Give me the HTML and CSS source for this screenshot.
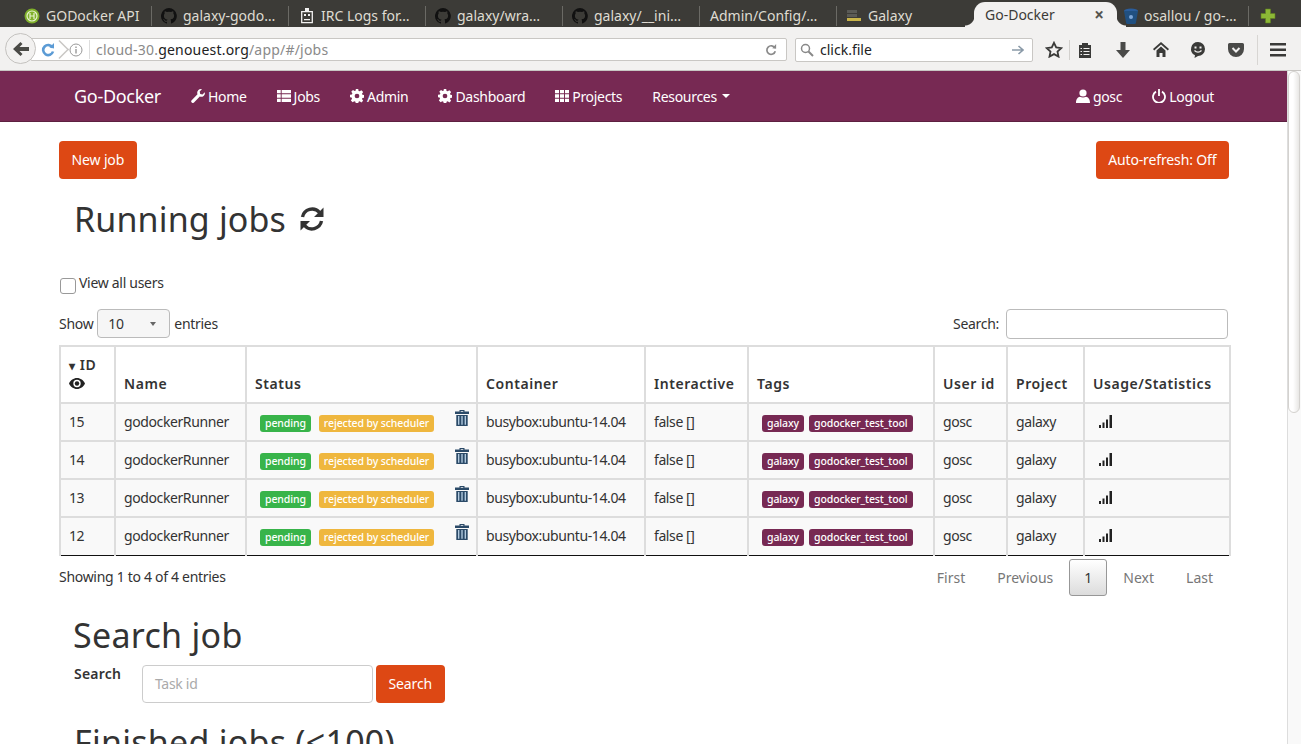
FILE: index.html
```html
<!DOCTYPE html>
<html>

<head>
    <title>Go-Docker</title>
    <link rel="stylesheet" href="styles.css">
</head>

<body>
    <svg class="defs" width="0" height="0">
        <symbol id="i-github" viewBox="0 0 16 16">
            <path fill="#111" d="M8 0a8 8 0 0 0-2.5 15.6c.4.1.5-.2.5-.4v-1.4c-2.2.5-2.7-1-2.7-1-.4-.9-.9-1.200-.9-1.200-.7-.5.100-.5.100-.5.800.1 1.200.8 1.200.8.700 1.200 1.900.9 2.300.7.100-.5.300-.9.500-1.100-1.800-.2-3.600-.9-3.600-4 0-.9.300-1.600.8-2.100-.1-.2-.4-1 .1-2.100 0 0 .7-.2 2.200.8a7.600 7.600 0 0 1 4 0c1.500-1 2.200-.8 2.200-.8.400 1.100.2 1.900.1 2.100.5.600.8 1.300.8 2.100 0 3.100-1.900 3.700-3.700 3.900.3.300.6.700.6 1.500v2.200c0 .2.100.5.600.4A8 8 0 0 0 8 0z"/>
        </symbol>
        <symbol id="i-trash" viewBox="0 0 14 16">
            <path fill="#2b4a68" d="M4.500 0h5v1.500H14V4H0V1.500h4.500zM5.700 1v.7h2.600V1zM1.300 5h11.400v11H1.300z"/>
            <path stroke="#b9d2e6" stroke-width="1.300" d="M3.700 6v8.800M7 6v8.800M10.300 6v8.800"/>
        </symbol>
        <symbol id="i-signal" viewBox="0 0 14 14">
            <path fill="#222" d="M0 11h2v3H0zM3.500 8.500h2V14h-2zM7 5.500h2V14H7zM10.500 1h2.500v13h-2.500z"/>
        </symbol>
        <symbol id="i-cog" viewBox="0 0 16 16">
            <path fill="#fff" fill-rule="evenodd" d="M6.600 0h2.800l.4 2.200 1.300.5L13 1.400l2 2-1.300 1.900.5 1.300 2.200.4v2.800l-2.200.4-.5 1.300 1.300 1.900-2 2-1.900-1.300-1.300.5-.4 2.200H6.600l-.4-2.200-1.300-.5L3 15l-2-2 1.300-1.900-.5-1.300L0 9.400V6.600l2.200-.4.500-1.300L1.400 3l2-2 1.900 1.300 1.300-.5zM8 5.300a2.700 2.700 0 1 0 0 5.400 2.700 2.700 0 0 0 0-5.400z"/>
        </symbol>
        <symbol id="i-list" viewBox="0 0 15 13">
            <path fill="#fff" d="M0 0h4v3.500H0zM5 0h10v3.500H5zM0 4.750h4v3.500H0zM5 4.750h10v3.500H5zM0 9.500h4V13H0zM5 9.500h10V13H5z"/>
        </symbol>
        <symbol id="i-th" viewBox="0 0 15 13">
            <path fill="#fff" d="M0 0h4.300v3.500H0zM5.350 0h4.300v3.500h-4.300zM10.700 0H15v3.500h-4.300zM0 4.750h4.300v3.500H0zM5.350 4.750h4.300v3.500h-4.300zM10.700 4.750H15v3.500h-4.300zM0 9.500h4.300V13H0zM5.350 9.500h4.300V13h-4.300zM10.700 9.500H15V13h-4.300z"/>
        </symbol>
    </svg>

    <div class="tabbar">
        <div class="tab tab-first">
            <svg class="tab-icon" viewBox="0 0 16 16"><circle cx="8" cy="8" r="7.500" fill="#7fb02a"/><circle cx="8" cy="8" r="5" fill="none" stroke="#e8f2d0" stroke-width="1.200"/><path stroke="#e8f2d0" stroke-width="1.200" d="M6 5v6M10 5v6M6 8h4"/></svg>
            <span>GODocker API</span>
        </div>
        <div class="tab"><svg class="tab-icon"><use href="#i-github"/></svg><span>galaxy-godo…</span></div>
        <div class="tab tab-irc">
            <svg class="tab-icon" viewBox="0 0 16 16"><path fill="none" stroke="#f2f1f0" stroke-width="1.300" d="M2.700 3.700h10.600v11H2.700z"/><path fill="#f2f1f0" d="M6 0h4v3H6zM5 6h2v2H5zM9 6h2v2H9zM5 11h6v1.200H5z"/></svg>
            <span>IRC Logs for…</span>
        </div>
        <div class="tab"><svg class="tab-icon"><use href="#i-github"/></svg><span>galaxy/wra…</span></div>
        <div class="tab"><svg class="tab-icon"><use href="#i-github"/></svg><span>galaxy/__ini…</span></div>
        <div class="tab tab-noicon"><span>Admin/Config/…</span></div>
        <div class="tab tab-plain">
            <svg class="tab-icon" viewBox="0 0 16 16"><path fill="#5a5a56" d="M1 2h10v3H1zM1 6h10v3H1z"/><path fill="#c9b44a" d="M1 10h14v3H1z"/></svg>
            <span>Galaxy</span>
        </div>
        <div class="tab tab-active"><span>Go-Docker</span><b class="tab-close">×</b></div>
        <div class="tab tab-after">
            <svg class="tab-icon" viewBox="0 0 16 16"><ellipse cx="8" cy="3" rx="7" ry="2.500" fill="#2a5d9c"/><path fill="#205081" d="M1 3h14l-2 11.500a5 2 0 0 1-10 0z"/><circle cx="8" cy="9" r="2" fill="#7da7d8"/></svg>
            <span>osallou / go-…</span>
        </div>
        <svg class="tab-plus" viewBox="0 0 16 16"><path fill="#8cb836" stroke="#5f7f20" stroke-width=".6" d="M5.500 1h5v4.500H15v5h-4.500V15h-5v-4.500H1v-5h4.500z"/></svg>
    </div>

    <div class="toolbar">
        <div class="back-btn"><svg width="16" height="14" viewBox="0 0 16 14"><path fill="#4a4a46" d="M7.500 0l2 2-3 3H16v4H6.500l3 3-2 2L0 7z"/></svg></div>
        <div class="urlbar">
            <svg class="reload-blue" width="14" height="14" viewBox="0 0 14 14"><path fill="none" stroke="#5b9bd5" stroke-width="2.600" d="M11.500 4.500A5 5 0 1 0 12 8.500"/><path fill="#5b9bd5" d="M8.500 4.500L13 0v5.500z"/></svg>
            <span class="url-chevron"></span>
            <svg class="info-icon" width="14" height="14" viewBox="0 0 14 14"><circle cx="7" cy="7" r="6" fill="none" stroke="#999"/><path stroke="#999" stroke-width="1.400" d="M7 6v4.500M7 3.500v1.400"/></svg>
            <span class="url-text">cloud-30.<b>genouest.org</b>/app/#/jobs</span>
            <svg class="reload-gray" width="12" height="12" viewBox="0 0 14 14"><path fill="none" stroke="#8a8a8a" stroke-width="2" d="M11.500 4.500A5 5 0 1 0 12 8.500"/><path fill="#8a8a8a" d="M8.500 5L13 0v5.500z"/></svg>
        </div>
        <div class="searchbar">
            <svg width="14" height="14" viewBox="0 0 14 14"><circle cx="5.500" cy="5.500" r="4" fill="none" stroke="#888" stroke-width="1.500"/><path stroke="#888" stroke-width="2" d="M8.500 8.500L13 13"/></svg>
            <span class="search-text">click.file</span>
            <svg width="12" height="10" viewBox="0 0 12 10"><path fill="none" stroke="#8a9aa8" stroke-width="1.600" d="M0 5h10M6.500 1L11 5 6.500 9"/></svg>
        </div>
        <div class="tool-icons">
            <svg width="18" height="17" viewBox="0 0 18 17"><path fill="none" stroke="#3a3a38" stroke-width="1.800" d="M9 1.800l2.200 4.700 5 .6-3.700 3.500 1 5L9 13.100l-4.500 2.500 1-5L1.800 7.100l5-.6z"/></svg>
            <span class="tool-sep-short"></span>
            <svg class="tool-clip" width="14" height="16" viewBox="0 0 14 16"><path fill="#3a3a38" d="M1 3h3V1h6v2h3v13H1z"/><path stroke="#f2f1f0" d="M5.500 6.500h6M5.500 9.500h6M5.500 12.500h6M2.500 6.500h1.500M2.500 9.500h1.500M2.500 12.500h1.500"/></svg>
            <svg class="tool-down" width="14" height="16" viewBox="0 0 14 16"><path fill="#4a4a48" d="M4.500 0h5v8H14l-7 8-7-8h4.500z"/></svg>
            <svg class="tool-home" width="16" height="15" viewBox="0 0 16 15"><path fill="#3a3a38" d="M8 0l8 7-1.200 1.400L8 2.500 1.200 8.400 0 7zM3.500 8.500L8 4.600l4.500 3.900V15h-3v-4h-3v4h-3z"/></svg>
            <svg class="tool-smile" width="16" height="16" viewBox="0 0 16 16"><path fill="#3a3a38" d="M8 0a7 7 0 0 1 0 14l-3.500 2 .5-2.700A7 7 0 0 1 8 0z"/><path fill="#f2f1f0" d="M4.500 4.500h2v2h-2zM9.500 4.500h2v2h-2z"/><path fill="none" stroke="#f2f1f0" stroke-width="1.300" d="M4.500 8.500c2 2 5 2 7 0"/></svg>
            <svg class="tool-pocket" width="16" height="14" viewBox="0 0 16 14"><path fill="#4a4a48" d="M1.500 0h13A1.500 1.500 0 0 1 16 1.500V6a8 8 0 0 1-16 0V1.500A1.500 1.500 0 0 1 1.500 0z"/><path fill="none" stroke="#f2f1f0" stroke-width="2" d="M4.500 5L8 8.500 11.500 5"/></svg>
            <span class="tool-sep"></span>
            <svg class="tool-menu" width="16" height="14" viewBox="0 0 16 14"><path fill="#3a3a38" d="M0 0h16v2.500H0zM0 5.500h16V8H0zM0 11h16v2.500H0z"/></svg>
        </div>
    </div>

    <div class="viewport">
        <div class="content">
            <nav class="navbar">
                <a class="brand">Go-Docker</a>
                <a class="nav-link"><svg class="nav-icon" viewBox="0 0 14 14"><path fill="#fff" d="M13.800 3.200a3.800 3.800 0 0 1-5 4.400L3 13.500a1.500 1.500 0 0 1-2.300-2.300L6.500 5.300A3.800 3.800 0 0 1 11 .2L8.700 2.500l.5 2.400 2.300.5z"/></svg>Home</a>
                <a class="nav-link"><svg class="nav-icon"><use href="#i-list"/></svg>Jobs</a>
                <a class="nav-link"><svg class="nav-icon"><use href="#i-cog"/></svg>Admin</a>
                <a class="nav-link"><svg class="nav-icon"><use href="#i-cog"/></svg>Dashboard</a>
                <a class="nav-link"><svg class="nav-icon"><use href="#i-th"/></svg>Projects</a>
                <a class="nav-link">Resources <span class="caret"></span></a>
                <a class="nav-link nav-right"><svg class="nav-icon" viewBox="0 0 14 14"><circle cx="7" cy="4" r="3.600" fill="#fff"/><path fill="#fff" d="M0 14c0-4 2-6 4-6.200 1.800 1 4.200 1 6 0 2 .2 4 2.200 4 6.200z"/></svg>gosc</a>
                <a class="nav-link"><svg class="nav-icon" viewBox="0 0 14 14"><path fill="none" stroke="#fff" stroke-width="1.800" d="M4 2.600a6 6 0 1 0 6 0M7 0v7"/></svg>Logout</a>
            </nav>

            <div class="page">
                <div class="btn-row">
                    <a class="btn">New job</a>
                    <a class="btn">Auto-refresh: Off</a>
                </div>

                <h2 class="running-title">Running jobs
                    <svg class="refresh-icon" width="26" height="26" viewBox="0 0 26 26"><path fill="none" stroke="#333" stroke-width="3.400" d="M3.500 11A9.800 9.800 0 0 1 20.500 6.500M22.500 15A9.800 9.800 0 0 1 5.500 19.500"/><path fill="#333" d="M24.500 1.500V11h-9.500zM1.500 24.500V15H11z"/></svg>
                </h2>

                <label class="view-all"><span class="checkbox"></span>View all users</label>

                <div class="table-top">
                    <div class="length">Show <span class="select-box"><span class="select-value">10</span><span class="select-arrow"></span></span> entries</div>
                    <div class="filter">Search: <span class="filter-input"></span></div>
                </div>

                <table class="jobs">
                    <colgroup>
                        <col class="c-id"><col class="c-name"><col class="c-status"><col class="c-container"><col class="c-inter"><col class="c-tags"><col class="c-user"><col class="c-project"><col class="c-usage">
                    </colgroup>
                    <thead>
                        <tr>
                            <th><span class="sort-arrow">▾</span> ID<br><svg class="eye" width="16" height="11" viewBox="0 0 16 11"><path fill="#222" fill-rule="evenodd" d="M8 0c3.500 0 6.500 2.300 8 5.500C14.500 8.700 11.500 11 8 11S1.500 8.700 0 5.500C1.500 2.300 4.500 0 8 0zm0 1.800a3.700 3.700 0 1 0 0 7.400 3.700 3.700 0 0 0 0-7.400z"/><circle cx="8" cy="5.500" r="2.200" fill="#222"/></svg></th>
                            <th>Name</th>
                            <th>Status</th>
                            <th>Container</th>
                            <th>Interactive</th>
                            <th>Tags</th>
                            <th>User id</th>
                            <th>Project</th>
                            <th>Usage/Statistics</th>
                        </tr>
                    </thead>
                    <tbody>
                        <tr>
                            <td>15</td>
                            <td>godockerRunner</td>
                            <td class="status-cell"><span class="label label-green">pending</span><span class="label label-yellow">rejected by scheduler</span><svg class="trash"><use href="#i-trash"/></svg></td>
                            <td>busybox:ubuntu-14.04</td>
                            <td>false []</td>
                            <td class="tags-cell"><span class="label label-purple">galaxy</span><span class="label label-purple">godocker_test_tool</span></td>
                            <td>gosc</td>
                            <td>galaxy</td>
                            <td class="usage-cell"><svg class="signal"><use href="#i-signal"/></svg></td>
                        </tr>
                        <tr>
                            <td>14</td>
                            <td>godockerRunner</td>
                            <td class="status-cell"><span class="label label-green">pending</span><span class="label label-yellow">rejected by scheduler</span><svg class="trash"><use href="#i-trash"/></svg></td>
                            <td>busybox:ubuntu-14.04</td>
                            <td>false []</td>
                            <td class="tags-cell"><span class="label label-purple">galaxy</span><span class="label label-purple">godocker_test_tool</span></td>
                            <td>gosc</td>
                            <td>galaxy</td>
                            <td class="usage-cell"><svg class="signal"><use href="#i-signal"/></svg></td>
                        </tr>
                        <tr>
                            <td>13</td>
                            <td>godockerRunner</td>
                            <td class="status-cell"><span class="label label-green">pending</span><span class="label label-yellow">rejected by scheduler</span><svg class="trash"><use href="#i-trash"/></svg></td>
                            <td>busybox:ubuntu-14.04</td>
                            <td>false []</td>
                            <td class="tags-cell"><span class="label label-purple">galaxy</span><span class="label label-purple">godocker_test_tool</span></td>
                            <td>gosc</td>
                            <td>galaxy</td>
                            <td class="usage-cell"><svg class="signal"><use href="#i-signal"/></svg></td>
                        </tr>
                        <tr>
                            <td>12</td>
                            <td>godockerRunner</td>
                            <td class="status-cell"><span class="label label-green">pending</span><span class="label label-yellow">rejected by scheduler</span><svg class="trash"><use href="#i-trash"/></svg></td>
                            <td>busybox:ubuntu-14.04</td>
                            <td>false []</td>
                            <td class="tags-cell"><span class="label label-purple">galaxy</span><span class="label label-purple">godocker_test_tool</span></td>
                            <td>gosc</td>
                            <td>galaxy</td>
                            <td class="usage-cell"><svg class="signal"><use href="#i-signal"/></svg></td>
                        </tr>
                    </tbody>
                </table>

                <div class="table-bottom">
                    <div class="info">Showing 1 to 4 of 4 entries</div>
                    <div class="pager">
                        <a class="page-link">First</a>
                        <a class="page-link">Previous</a>
                        <a class="page-current">1</a>
                        <a class="page-link">Next</a>
                        <a class="page-link">Last</a>
                    </div>
                </div>

                <h2 class="search-title">Search job</h2>
                <div class="search-form">
                    <label class="search-label">Search</label>
                    <span class="task-input">Task id</span>
                    <a class="btn">Search</a>
                </div>
                <h2 class="finished-title">Finished jobs (&lt;100)</h2>
            </div>
        </div>
        <div class="scrollbar"><div class="scroll-thumb"></div></div>
    </div>
</body>

</html>
```

FILE: styles.css
```css
html,
body {
    margin: 0;
    height: 744px;
    overflow: hidden;
}

body {
    font-family: "Noto Sans", sans-serif;
    font-size: 14px;
    color: #333;
    background-color: #fff;
}

.defs {
    display: block;
    height: 0;
}

/* browser tab strip */
.tabbar {
    display: flex;
    align-items: center;
    height: 27px;
    padding-left: 15px;
    padding-top: 4px;
    box-sizing: border-box;
    background-color: #3c3b37;
    color: #dfdbd2;
    font-size: 14px;
}

.tab {
    display: flex;
    align-items: center;
    width: 137px;
    height: 20px;
    padding-left: 9px;
    box-sizing: border-box;
    border-right: 1px solid #6b6a65;
    white-space: nowrap;
}

.tab-icon {
    width: 16px;
    height: 16px;
    margin-right: 6px;
    flex: none;
}

.tab-irc {
    padding-left: 10px;
}

.tab-noicon {
    padding-left: 10px;
}

.tab-plain {
    border-right: none;
}

.tab-active {
    position: relative;
    align-self: flex-end;
    width: 143px;
    height: 25px;
    padding-left: 11px;
    border: none;
    border-radius: 11px 11px 0 0;
    background-color: #f2f1f0;
    color: #3c3b37;
}

/* flared bottom corners of the selected tab */
.tab-active::before,
.tab-active::after {
    content: "";
    position: absolute;
    bottom: 0;
    width: 9px;
    height: 11px;
}

.tab-active::before {
    left: -9px;
    background: radial-gradient(circle at 0 0, transparent 9px, #f2f1f0 10px);
}

.tab-active::after {
    right: -9px;
    background: radial-gradient(circle at 100% 0, transparent 9px, #f2f1f0 10px);
}

.tab-close {
    margin-left: auto;
    margin-right: 13px;
    font-size: 17px;
    color: #55544f;
}

.tab-after {
    width: 132px;
    padding-left: 6px;
    position: relative;
    z-index: 1;
}

.tab-after .tab-icon {
    margin-right: 5px;
}

.tab-plus {
    width: 16px;
    height: 16px;
    margin-left: 11px;
}

/* browser toolbar */
.toolbar {
    display: flex;
    align-items: center;
    height: 44px;
    padding-left: 30px;
    padding-top: 2px;
    box-sizing: border-box;
    position: relative;
    background-color: #f2f1f0;
    border-bottom: 1px solid #c8c6c3;
}

.back-btn {
    position: absolute;
    left: 5px;
    top: 6px;
    width: 31px;
    height: 31px;
    display: flex;
    align-items: center;
    justify-content: center;
    border: 1px solid #c4c2bf;
    border-radius: 50%;
    background-color: #f2f1f0;
    box-sizing: border-box;
}

.urlbar {
    display: flex;
    align-items: center;
    width: 757px;
    height: 23px;
    padding-left: 10px;
    padding-right: 9px;
    box-sizing: border-box;
    background-color: #fff;
    border: 1px solid #c9c7c4;
    border-radius: 2px;
}

.url-chevron {
    width: 8px;
    height: 8px;
    border-top: 1px solid #c9c7c4;
    border-right: 1px solid #c9c7c4;
    transform: rotate(45deg) scale(1.5);
}

.info-icon {
    margin-left: 5px;
    margin-right: 6px;
}

.url-text {
    color: #8a8a8a;
    font-size: 14px;
    letter-spacing: 0.2px;
    border-left: 1px solid #ddd;
    padding-left: 6px;
}

.url-text b {
    color: #222;
    font-weight: normal;
}

.reload-gray {
    margin-left: auto;
}

.searchbar {
    display: flex;
    align-items: center;
    width: 238px;
    height: 24px;
    margin-left: 8px;
    padding: 0 8px 0 4px;
    box-sizing: border-box;
    background-color: #fff;
    border: 1px solid #c9c7c4;
    border-radius: 2px;
}

.search-text {
    flex: 1;
    margin-left: 6px;
    color: #222;
    font-size: 14px;
}

.tool-icons {
    display: flex;
    align-items: center;
    margin-left: 12px;
}

.tool-sep-short {
    width: 1px;
    height: 20px;
    margin-left: 6px;
    background-color: #d2d0cd;
}

.tool-clip {
    margin-left: 8px;
}

.tool-down {
    margin-left: 24px;
}

.tool-home {
    margin-left: 23px;
}

.tool-smile {
    margin-left: 21px;
}

.tool-pocket {
    margin-left: 22px;
}

.tool-sep {
    width: 1px;
    height: 30px;
    margin-left: 13px;
    background-color: #d8d6d3;
}

.tool-menu {
    margin-left: 12px;
}

/* page area */
.viewport {
    display: flex;
    height: 673px;
    overflow: hidden;
}

.content {
    width: 1287px;
    flex: none;
    letter-spacing: -0.3px;
}

.navbar {
    display: flex;
    align-items: center;
    height: 51px;
    padding-left: 74px;
    padding-right: 73px;
    box-sizing: border-box;
    background-color: #772953;
    border-bottom: 1px solid #5d2040;
    color: #fff;
}

.brand {
    font-size: 18px;
    margin-right: 30px;
}

.nav-link {
    display: flex;
    align-items: center;
    margin-right: 30px;
}

.nav-right {
    margin-left: auto;
}

.nav-link:last-child {
    margin-right: 0;
}

.nav-icon {
    width: 14px;
    height: 14px;
    margin-right: 3px;
}

.caret {
    width: 0;
    height: 0;
    margin-left: 5px;
    border-top: 4px solid #fff;
    border-left: 4px solid transparent;
    border-right: 4px solid transparent;
}

.page {
    width: 1170px;
    margin-left: 59px;
}

.btn-row {
    display: flex;
    justify-content: space-between;
    width: 1170px;
    padding-top: 19px;
}

.btn {
    display: inline-block;
    height: 38px;
    line-height: 38px;
    padding: 0 12.5px;
    box-sizing: border-box;
    border-radius: 4px;
    background-color: #dd4814;
    color: #fff;
    letter-spacing: -0.13px;
}

h2 {
    margin: 0;
    font-weight: 400;
    font-size: 34px;
    letter-spacing: 0;
    color: #333;
}

.running-title {
    display: flex;
    align-items: center;
    height: 50px;
    margin-top: 15px;
    padding-left: 15px;
    letter-spacing: 0.15px;
}

.refresh-icon {
    margin-left: 13px;
}

.view-all {
    display: flex;
    align-items: flex-start;
    height: 22px;
    margin-top: 29px;
}

.checkbox {
    width: 16px;
    height: 16px;
    margin: 5px 3px 0 1px;
    box-sizing: border-box;
    border: 1px solid #999;
    border-radius: 3px;
    background-color: #fff;
}

.table-top {
    display: flex;
    justify-content: space-between;
    align-items: center;
    width: 1169px;
    height: 31px;
    margin-top: 13px;
}

.length {
    display: flex;
    align-items: center;
}

.select-box {
    display: flex;
    align-items: center;
    width: 73px;
    height: 29px;
    margin: 0 4px;
    box-sizing: border-box;
    border: 1px solid #bbb;
    border-radius: 4px;
    background-color: #f6f6f6;
}

.select-value {
    width: 47px;
    padding-left: 10px;
    box-sizing: border-box;
}

.select-arrow {
    width: 0;
    height: 0;
    margin-left: 5px;
    border-top: 4px solid #666;
    border-left: 3px solid transparent;
    border-right: 3px solid transparent;
}

.filter {
    display: flex;
    align-items: center;
}

.filter-input {
    width: 222px;
    height: 30px;
    margin-left: 7px;
    box-sizing: border-box;
    border: 1px solid #bbb;
    border-radius: 4px;
}

/* jobs table */
.jobs {
    width: 1170px;
    margin-top: 6px;
    table-layout: fixed;
    border-collapse: collapse;
    border-bottom: 1px solid #111;
}

.c-id { width: 55px; }
.c-name { width: 131px; }
.c-status { width: 231px; }
.c-container { width: 168px; }
.c-inter { width: 103px; }
.c-tags { width: 186px; }
.c-user { width: 73px; }
.c-project { width: 77px; }
.c-usage { width: 146px; }

.jobs th {
    height: 57px;
    padding: 8px 8px 9px;
    box-sizing: border-box;
    border: 2px solid #ddd;
    text-align: left;
    vertical-align: bottom;
    font-weight: 600;
    letter-spacing: 0.55px;
    white-space: nowrap;
}

.jobs td {
    height: 38px;
    padding: 0 8px 2px;
    box-sizing: border-box;
    border: 2px solid #ddd;
    background-color: #f9f9f9;
    letter-spacing: -0.4px;
    white-space: nowrap;
}

.jobs tbody tr:last-child td {
    border-bottom: 0;
}

.sort-arrow {
    font-size: 12px;
}

.eye {
    display: inline-block;
}

.jobs .status-cell,
.jobs .tags-cell {
    position: relative;
    padding-bottom: 0;
}

.label {
    display: inline-block;
    height: 17px;
    line-height: 17px;
    padding: 0 5px;
    border-radius: 3px;
    color: #fff;
    font-size: 10.5px;
    font-weight: 500;
    letter-spacing: -0.1px;
    vertical-align: middle;
}

.label-green {
    margin-left: 5px;
    margin-right: 8px;
    background-color: #38b44a;
}

.label-yellow {
    background-color: #efb73e;
}

.label-purple {
    background-color: #772953;
    margin-right: 5px;
}

.label-purple:first-child {
    margin-left: 5px;
}

.trash {
    position: absolute;
    right: 7px;
    top: 6px;
    width: 14px;
    height: 16px;
}

.signal {
    display: block;
    width: 14px;
    height: 14px;
    margin-left: 6px;
}

.table-bottom {
    display: flex;
    justify-content: space-between;
    align-items: flex-start;
    width: 1170px;
    margin-top: 3px;
}

.info {
    padding-top: 8px;
}

.pager {
    display: flex;
    align-items: center;
    height: 38px;
    letter-spacing: 0;
}

.page-link {
    padding: 0 16px;
    color: #777;
}

.page-current {
    width: 38px;
    height: 37px;
    line-height: 36px;
    box-sizing: border-box;
    text-align: center;
    border: 1px solid #979797;
    border-radius: 3px;
    background: linear-gradient(#fff, #dcdcdc);
    color: #333;
}

.search-title {
    height: 50px;
    line-height: 50px;
    margin-top: 13px;
    padding-left: 14px;
    letter-spacing: 0.3px;
}

.search-form {
    display: flex;
    align-items: flex-start;
    margin-top: 5px;
    padding-left: 15px;
}

.search-label {
    width: 68px;
    font-weight: 600;
    line-height: 18px;
    letter-spacing: 0.2px;
}

.task-input {
    width: 231px;
    height: 38px;
    line-height: 36px;
    margin-right: 3px;
    padding-left: 12px;
    box-sizing: border-box;
    border: 1px solid #ccc;
    border-radius: 4px;
    color: #aaa;
}

.finished-title {
    margin-top: 16px;
    padding-left: 15px;
    letter-spacing: 0.25px;
    white-space: nowrap;
}

.scrollbar {
    flex: 1;
    background-color: #f9f9f9;
    border-left: 1px solid #ddd;
}

.scroll-thumb {
    width: 12px;
    height: 342px;
    border-radius: 6px;
    background: linear-gradient(to right, #fff 40%, #e8e7e5);
    border: 1px solid #d4d2cf;
    box-sizing: border-box;
}
```
